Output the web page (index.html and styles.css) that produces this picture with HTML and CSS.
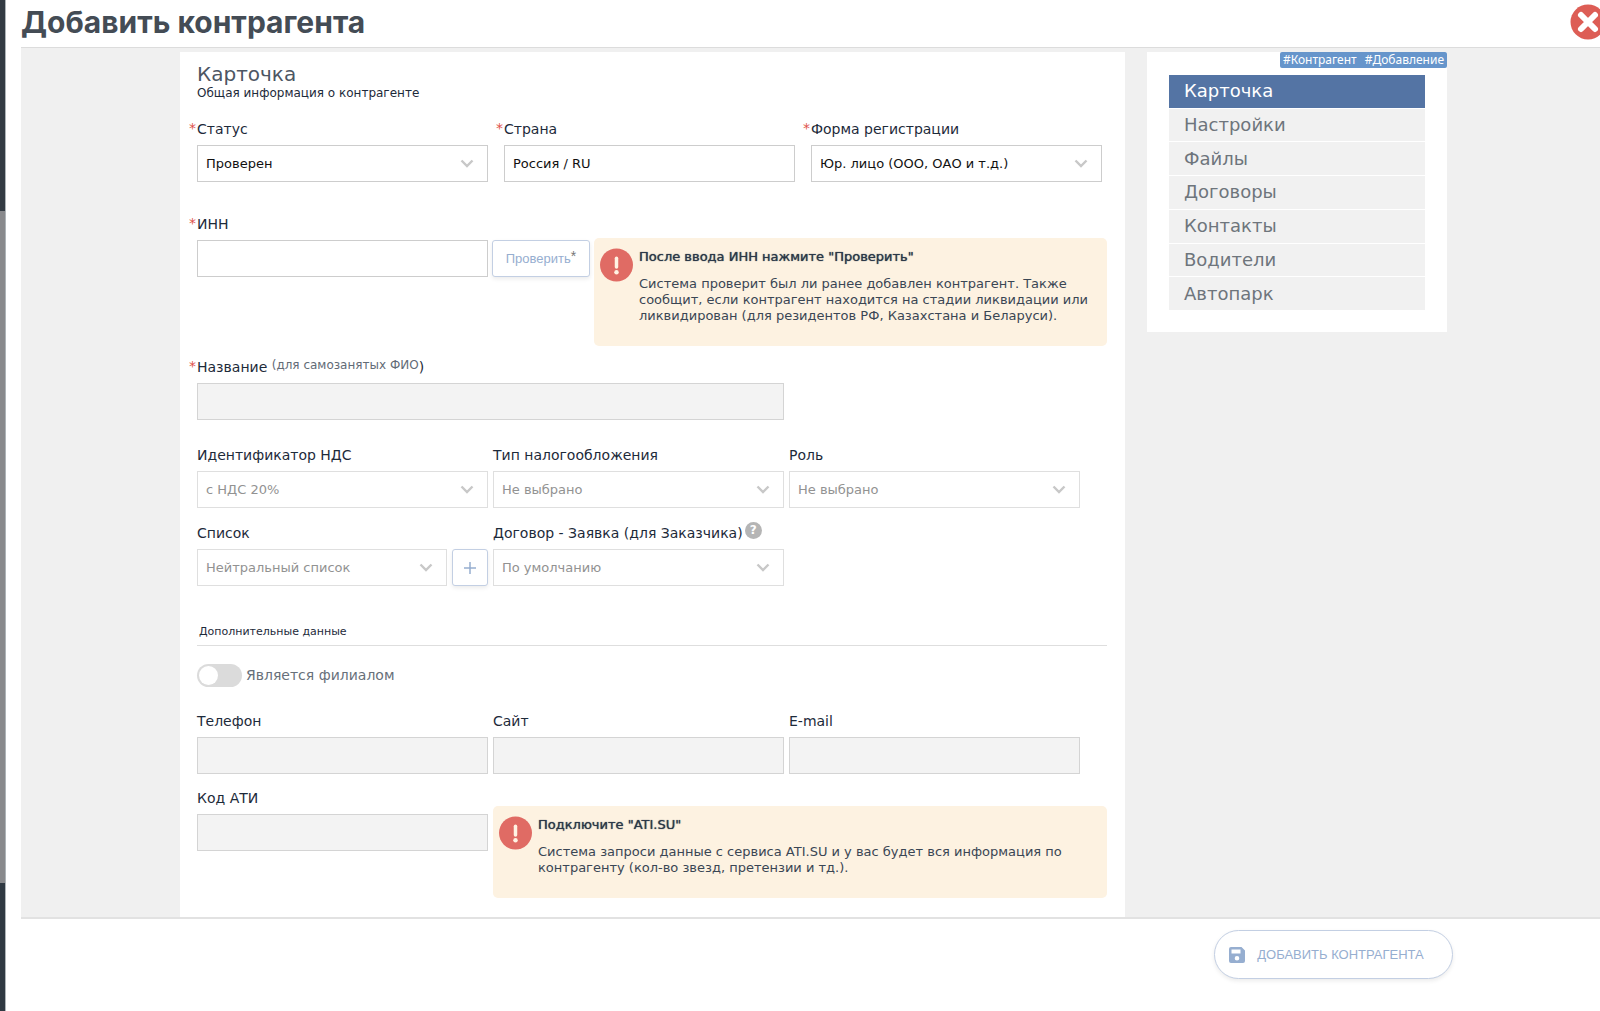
FILE: index.html
```html
<!DOCTYPE html>
<html lang="ru">
<head>
<meta charset="utf-8">
<meta name="viewport" content="width=device-width, initial-scale=1">
<title>Добавить контрагента</title>
<link rel="stylesheet" href="styles.css">
</head>
<body>
<svg class="sprite" aria-hidden="true">
  <symbol id="chevron" viewBox="0 0 14 9"><path d="M1.5 1.5 7 7l5.500-5.500" fill="none" stroke="currentColor" stroke-width="2.400"/></symbol>
  <symbol id="alert" viewBox="0 0 34 34"><circle cx="17" cy="17" r="17" fill="#e06b64"/><path d="M17 10v9" stroke="#fff3e3" stroke-width="3.600" stroke-linecap="round"/><circle cx="17" cy="24.500" r="2.300" fill="#fff3e3"/></symbol>
</svg>
<div class="backdrop"></div>
<div class="modal">
  <header class="header">
    <h1 class="title">Добавить контрагента</h1>
    <button class="close" type="button" aria-label="Закрыть">
      <svg viewBox="0 0 36 36"><circle cx="18" cy="18" r="17.500" fill="#dd5d55"/><path d="m11 11 14 14m0-14L11 25" stroke="#fff" stroke-width="6" stroke-linecap="round"/></svg>
    </button>
  </header>

  <main class="content">
    <form class="card" id="form">
      <h2 class="card-title">Карточка</h2>
      <p class="card-sub">Общая информация о контрагенте</p>

      <div class="row row-wide">
        <div class="field">
          <label class="label" for="status"><span class="star">*</span>Статус</label>
          <div class="select"><select id="status"><option>Проверен</option></select><svg><use href="#chevron"/></svg></div>
        </div>
        <div class="field">
          <label class="label" for="country"><span class="star">*</span>Страна</label>
          <input class="input" id="country" type="text" value="Россия / RU">
        </div>
        <div class="field">
          <label class="label" for="regform"><span class="star">*</span>Форма регистрации</label>
          <div class="select"><select id="regform"><option>Юр. лицо (ООО, ОАО и т.д.)</option></select><svg><use href="#chevron"/></svg></div>
        </div>
      </div>

      <div class="row row-inn">
        <div class="field">
          <label class="label" for="inn"><span class="star">*</span>ИНН</label>
          <input class="input" id="inn" type="text">
        </div>
        <button class="btn btn-check" type="button">Проверить<span class="btn-star">*</span></button>
        <div class="notice">
          <svg class="notice-icon"><use href="#alert"/></svg>
          <div>
            <h3 class="notice-title">После ввода ИНН нажмите "Проверить"</h3>
            <p class="notice-text">Система проверит был ли ранее добавлен контрагент. Также сообщит, если контрагент находится на стадии ликвидации или ликвидирован (для резидентов РФ, Казахстана и Беларуси).</p>
          </div>
        </div>
      </div>

      <div class="row row-tight row-name">
        <div class="field span-2">
          <label class="label" for="name"><span class="star">*</span>Название <span class="hint">(для самозанятых ФИО</span>)</label>
          <input class="input" id="name" type="text" disabled>
        </div>
      </div>

      <div class="row row-tight row-tax">
        <div class="field">
          <label class="label" for="vat">Идентификатор НДС</label>
          <div class="select"><select id="vat" disabled><option>с НДС 20%</option></select><svg><use href="#chevron"/></svg></div>
        </div>
        <div class="field">
          <label class="label" for="tax">Тип налогообложения</label>
          <div class="select"><select id="tax" disabled><option>Не выбрано</option></select><svg><use href="#chevron"/></svg></div>
        </div>
        <div class="field">
          <label class="label" for="role">Роль</label>
          <div class="select"><select id="role" disabled><option>Не выбрано</option></select><svg><use href="#chevron"/></svg></div>
        </div>
      </div>

      <div class="row row-tight">
        <div class="field">
          <label class="label" for="list">Список</label>
          <div class="with-add">
            <div class="select"><select id="list" disabled><option>Нейтральный список</option></select><svg><use href="#chevron"/></svg></div>
            <button class="btn btn-add" type="button" aria-label="Добавить список"><svg viewBox="0 0 12 12"><path d="M6 0v12M0 6h12" stroke="currentColor" stroke-width="1.500"/></svg></button>
          </div>
        </div>
        <div class="field">
          <div class="label-line">
            <label class="label" for="contract">Договор - Заявка (для Заказчика)</label>
            <span class="help">?</span>
          </div>
          <div class="select"><select id="contract" disabled><option>По умолчанию</option></select><svg><use href="#chevron"/></svg></div>
        </div>
      </div>

      <h3 class="section">Дополнительные данные</h3>

      <label class="toggle"><input type="checkbox">Является филиалом</label>

      <div class="row row-tight row-contacts">
        <div class="field">
          <label class="label" for="phone">Телефон</label>
          <input class="input" id="phone" type="tel" disabled>
        </div>
        <div class="field">
          <label class="label" for="site">Сайт</label>
          <input class="input" id="site" type="text" disabled>
        </div>
        <div class="field">
          <label class="label" for="email">E-mail</label>
          <input class="input" id="email" type="email" disabled>
        </div>
      </div>

      <div class="row row-ati">
        <div class="field">
          <label class="label" for="ati">Код АТИ</label>
          <input class="input" id="ati" type="text" disabled>
        </div>
        <div class="notice">
          <svg class="notice-icon"><use href="#alert"/></svg>
          <div>
            <h3 class="notice-title">Подключите "ATI.SU"</h3>
            <p class="notice-text">Система запроси данные с сервиса ATI.SU и у вас будет вся информация по контрагенту (кол-во звезд, претензии и тд.).</p>
          </div>
        </div>
      </div>
    </form>

    <aside class="side">
      <div class="tags"><span>#Контрагент</span><span>#Добавление</span></div>
      <nav class="menu">
        <a class="active" href="#card">Карточка</a>
        <a href="#settings">Настройки</a>
        <a href="#files">Файлы</a>
        <a href="#contracts">Договоры</a>
        <a href="#contacts">Контакты</a>
        <a href="#drivers">Водители</a>
        <a href="#fleet">Автопарк</a>
      </nav>
    </aside>
  </main>

  <footer class="footer">
    <button class="btn submit" type="submit" form="form">
      <svg viewBox="0 0 16 16"><path fill="currentColor" fill-rule="evenodd" d="M2 0h10.500L16 3.500V14a2 2 0 0 1-2 2H2a2 2 0 0 1-2-2V2a2 2 0 0 1 2-2Zm.500 2.500v4h9v-4ZM8 9a2.300 2.300 0 1 0 0 4.600A2.300 2.300 0 0 0 8 9Z"/></svg>
      ДОБАВИТЬ КОНТРАГЕНТА
    </button>
  </footer>
</div>
</body>
</html>
```

FILE: styles.css
```css
* { box-sizing: border-box; }

body {
  margin: 0;
  min-height: 100vh;
  display: flex;
  overflow: hidden;
  background: #fff;
  color: #1d2a3a;
  font: 14px/20px Verdana, "DejaVu Sans", sans-serif;
}

h1, h2, h3, p { margin: 0; font-weight: normal; }

.sprite { display: none; }

.backdrop {
  flex: none;
  width: 6px;
  border-right: 1px solid #aeb4b8;
  background: linear-gradient(#333b43 211px, #88898c 211px, #88898c 883px, #2f3942 883px);
}

.modal {
  flex: 1;
  min-width: 0;
  display: flex;
  flex-direction: column;
  padding-left: 15px;
}

/* Header */
.header {
  display: flex;
  justify-content: space-between;
  align-items: center;
  height: 48px;
  padding-bottom: 4px;
  border-bottom: 1px solid #dcdcdc;
}

.title {
  color: #444c55;
  font: bold 30px/40px Inter, sans-serif;
}

.close {
  flex: none;
  width: 36px;
  height: 36px;
  margin-right: -6px;
  padding: 0;
  border: 0;
  background: none;
}

.close svg { display: block; }

/* Content */
.content {
  flex: 1;
  display: grid;
  grid-template-columns: minmax(0, 1fr) 300px;
  gap: 22px;
  align-items: start;
  padding: 4px 153px 0 159px;
  border-bottom: 2px solid #e2e2e2;
  background: #f0f0f0;
}

.card {
  align-self: stretch;
  padding: 10px 18px 16px 17px;
  background: #fff;
}

.card-title { color: #4d5663; font-size: 20px; line-height: 24px; }
.card-sub { font-size: 12px; line-height: 14px; }

.row { display: grid; }
.row-wide { grid-template-columns: repeat(3, 1fr); gap: 16px; margin-top: 19px; padding-right: 5px; }
.row-inn { grid-template-columns: 291fr 98px 513fr; gap: 4px; margin-top: 32px; }
.row-tight { grid-template-columns: repeat(3, 1fr); gap: 5px; margin-top: 15px; padding-right: 27px; }
.row-name { margin-top: 11px; }
.row-tax { margin-top: 25px; }
.row-contacts { margin-top: 24px; }
.row-ati { grid-template-columns: 291fr 614fr; gap: 5px; margin-top: 14px; }
.span-2 { grid-column: span 2; }

.field { min-width: 0; }
.label { display: block; height: 26px; white-space: nowrap; }
.star { display: inline-block; width: 8px; margin-left: -8px; color: #e0524a; line-height: 16px; vertical-align: 1px; }
.hint { color: #626b76; font-size: 12px; vertical-align: 3px; line-height: 12px; }

.input,
.select select {
  display: block;
  width: 100%;
  height: 37px;
  margin: 0;
  padding: 0 8px;
  border: 1px solid #cdcdcd;
  border-radius: 0;
  background: #fff;
  color: #111;
  font: 13px/20px Verdana, "DejaVu Sans", sans-serif;
  appearance: none;
}

.input:disabled { background: #f3f3f3; border-color: #d4d4d4; }
.select select:disabled { border-color: #dfdfdf; color: #929292; opacity: 1; }

.select { display: grid; align-items: center; flex: 1; color: #c8c8c8; }
.select > * { grid-area: 1 / 1; }
.select svg { justify-self: end; width: 14px; height: 9px; margin-right: 14px; pointer-events: none; }

.with-add { display: flex; gap: 5px; }
.label-line { display: flex; gap: 2px; }
.help {
  width: 17px;
  height: 17px;
  border-radius: 50%;
  margin-top: -1px;
  background: #b5b5b5;
  color: #fff;
  font: bold 12px/17px "DejaVu Sans", sans-serif;
  text-align: center;
}

.btn {
  display: flex;
  align-items: center;
  justify-content: center;
  padding: 0;
  border: 1px solid #c3cfe3;
  border-radius: 3px;
  background: #fff;
  box-shadow: 0 2px 4px rgba(0, 0, 0, .08);
  color: #96aed0;
  font: 13px/20px "Liberation Sans", Arial, sans-serif;
  white-space: nowrap;
}

.btn-check { height: 37px; margin-top: 26px; }
.btn-star { align-self: flex-start; padding-top: 5px; color: #777; font-size: 14px; }
.btn-add { width: 36px; height: 37px; }
.btn-add svg { width: 12px; height: 12px; }

.notice {
  display: flex;
  gap: 6px;
  padding: 10px 12px 22px 6px;
  border-radius: 5px;
  background: #fdf2e1;
  color: #3a4654;
}

.row-inn .notice { margin-top: 24px; }
.row-ati .notice { margin-top: 18px; }
.notice-icon { flex: none; width: 33px; height: 34px; }
.notice-title { color: #2b3848; font-size: 13px; line-height: 18px; text-shadow: 0 0 1px currentColor; }
.notice-text { margin-top: 10px; font-size: 13px; line-height: 16px; }

.section {
  margin-top: 36px;
  padding: 0 2px 3px;
  border-bottom: 1px solid #dedede;
  font-size: 11px;
}

.toggle { display: flex; align-items: center; gap: 4px; margin-top: 17px; height: 24px; color: #68707a; }
.toggle input {
  appearance: none;
  width: 45px;
  height: 23px;
  margin: 0;
  padding: 2px;
  border-radius: 12px;
  background: #dbdbdb;
}
.toggle input::before { content: ""; display: block; width: 19px; height: 19px; border-radius: 50%; background: #fff; }
.toggle input:checked::before { margin-left: auto; }

/* Side menu */
.side { padding-bottom: 22px; background: #fff; }
.tags {
  display: flex;
  gap: 8px;
  width: max-content;
  margin: 0 0 7px auto;
  padding: 0 3px;
  border-radius: 2px;
  background: #6695cb;
  color: #fff;
  font: 12px/16px "Noto Sans", sans-serif;
}
.menu { display: grid; grid-auto-rows: 1fr; gap: 1px; height: 235px; margin: 0 22px; }
.menu a {
  display: flex;
  align-items: center;
  padding-left: 15px;
  background: #f1f1f1;
  color: #6e757c;
  font-size: 18px;
  text-decoration: none;
}
.menu .active { background: #5474a4; color: #fff; }

/* Footer */
.footer { display: flex; justify-content: flex-end; padding: 11px 147px 32px 0; }
.submit { gap: 12px; width: 239px; height: 49px; padding-right: 14px; border-radius: 25px; }
.submit svg { width: 16px; height: 16px; }
```
